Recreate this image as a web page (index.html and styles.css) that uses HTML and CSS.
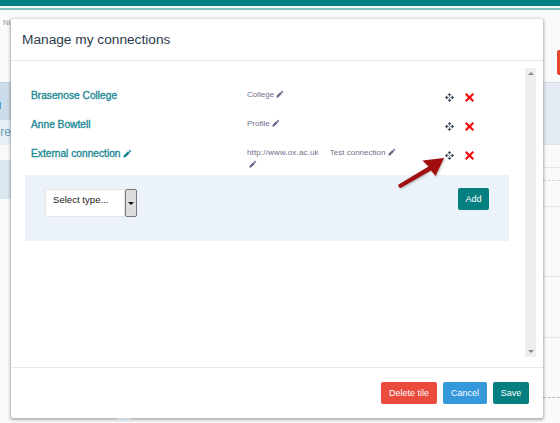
FILE: index.html
```html
<!DOCTYPE html>
<html lang="en">
<head>
<meta charset="utf-8">
<title>Manage my connections</title>
<link rel="stylesheet" href="styles.css">
</head>
<body>
<svg class="sprites" width="0" height="0" aria-hidden="true">
  <symbol id="pencil" viewBox="0 0 10 10"><path d="M7.300.7 9.300 2.700 8.200 3.800 6.200 1.800ZM5.600 2.400 7.600 4.400 3 9 .4 9.600 1 7Z"/></symbol>
  <symbol id="move" viewBox="0 0 11 11">
    <path d="M5.500 0 7.800 2.800H3.200ZM5.500 11 3.200 8.200H7.800ZM0 5.500 2.800 3.200V7.800ZM11 5.500 8.200 7.800V3.200Z"/>
    <path d="M4.900 2h1.200v2.600H4.900ZM4.900 6.400h1.200V9H4.900ZM2 4.900h2.600v1.200H2ZM6.400 4.900H9v1.200H6.400Z" opacity=".6"/>
  </symbol>
  <symbol id="cross" viewBox="0 0 10 10"><path d="M1.600 0 5 3.200 8.400 0 10 1.600 6.800 5 10 8.400 8.400 10 5 6.800 1.600 10 0 8.400 3.200 5 0 1.600Z"/></symbol>
</svg>

<div class="topbar"></div>
<div class="topline"></div>
<div class="backdrop">
  <div class="back-left">
    <span class="back-label">Ni</span>
    <div class="back-blue"><i class="back-mark"></i></div>
    <div class="back-light"><span class="back-re">re</span></div>
    <div class="back-blue2"></div>
  </div>
  <div class="back-right">
    <div class="back-red"></div>
    <div class="back-panel"></div>
    <div class="rule r1"></div>
    <div class="dash d1"></div>
    <div class="rule r2"></div>
    <div class="rule r3"></div>
    <div class="rule r4"></div>
    <div class="dash d2"></div>
  </div>
</div>

<main class="modal">
  <header class="modal-head"><h1>Manage my connections</h1></header>
  <section class="modal-body">
    <div class="list">
      <div class="row">
        <div class="name">Brasenose College</div>
        <div class="meta">College <svg class="pen"><use href="#pencil"/></svg></div>
        <div class="acts"><svg class="mv"><use href="#move"/></svg><svg class="del"><use href="#cross"/></svg></div>
      </div>
      <div class="row">
        <div class="name">Anne Bowtell</div>
        <div class="meta">Profile <svg class="pen"><use href="#pencil"/></svg></div>
        <div class="acts"><svg class="mv"><use href="#move"/></svg><svg class="del"><use href="#cross"/></svg></div>
      </div>
      <div class="row">
        <div class="name">External connection <svg class="pen pen-teal"><use href="#pencil"/></svg></div>
        <div class="meta meta-wide">
          <span class="url">http://www.ox.ac.uk<br><svg class="pen"><use href="#pencil"/></svg></span>
          <span>Test connection <svg class="pen"><use href="#pencil"/></svg></span>
        </div>
        <div class="acts"><svg class="mv"><use href="#move"/></svg><svg class="del"><use href="#cross"/></svg></div>
      </div>
      <div class="addbox">
        <div class="select">
          <span class="select-text">Select type...</span>
          <span class="select-btn"><i class="caret"></i></span>
        </div>
        <button class="btn btn-teal btn-add">Add</button>
      </div>
    </div>
    <div class="scrollbar">
      <i class="sb-up"></i>
      <i class="sb-down"></i>
    </div>
    <svg class="arrow" width="52" height="38" viewBox="0 0 52 38">
      <path d="M1.600 29.500 31.500 11.500 25.500 5.500 47 3 38.500 21 34 15.500 3.500 33Q.5 32 1.600 29.500Z" fill="#a00e0e"/>
    </svg>
  </section>
  <footer class="modal-foot">
    <button class="btn btn-red">Delete tile</button>
    <button class="btn btn-blue">Cancel</button>
    <button class="btn btn-teal">Save</button>
  </footer>
  <i class="under-tab"></i>
</main>
</body>
</html>
```
FILE: styles.css
```css
* { box-sizing: border-box; }
html, body { margin: 0; height: 100%; }
body {
  width: 560px;
  height: 423px;
  overflow: hidden;
  position: relative;
  background: #fafafa;
  font-family: "Liberation Sans", Arial, sans-serif;
  color: #333;
}
.sprites { position: absolute; }
.topbar { height: 6px; background: #047f81; }
.topline { height: 2px; margin-top: 2px; background: #7fc3c2; }

.backdrop { display: flex; justify-content: space-between; height: 413px; }
.back-left { width: 11px; position: relative; overflow: hidden; }
.back-label { position: absolute; left: 3px; top: 8px; font-size: 8px; color: #999; }
.back-blue { height: 38px; margin-top: 72px; background: #cbdcea; border-top: 1px solid #bfd2e0; position: relative; }
.back-mark { position: absolute; left: 0; top: 19px; width: 1px; height: 7px; background: #4b9fd0; }
.back-light { height: 25px; background: #e8eff6; font-size: 12px; line-height: 25px; color: #6b9cbc; text-align: right; }
.back-blue2 { height: 39px; margin-top: 15px; background: #dce8f0; }
.back-right { width: 17px; position: relative; }
.back-red { position: absolute; right: 0; top: 40px; width: 3px; height: 25px; background: #e8452f; border-radius: 2px 0 0 2px; }
.back-panel { height: 63px; margin-top: 72px; background: #e4ebf3; border-top: 1px solid #d5dfe9; border-bottom: 1px solid #dde5ec; }
.rule { height: 1px; background: #e6e6e6; }
.dash { height: 1px; border-top: 1px dashed #d2d2d2; }
.r1 { margin-top: 22px; }
.d1 { margin-top: 12px; }
.r2 { margin-top: 25px; }
.r3 { margin-top: 69px; }
.r4 { margin-top: 60px; }
.d2 { margin-top: 59px; border-top-color: #b8b8b8; }

.modal {
  position: absolute;
  left: 11px;
  top: 19px;
  width: 532px;
  height: 399px;
  display: flex;
  flex-direction: column;
  background: #fff;
  border-radius: 2px;
  box-shadow: 0 1px 3px 1px rgba(0,0,0,.3);
}
.under-tab { position: absolute; left: 106px; top: 399px; width: 14px; height: 2px; background: #c9d8e2; }
.modal-head { height: 42px; padding: 12px 11px 0; border-bottom: 1px solid #e8e8e8; flex: none; }
.modal-head h1 { margin: 0; font-size: 13.700px; line-height: 17px; font-weight: 400; color: #2c3a4a; }

.modal-body { flex: 1; position: relative; display: flex; padding: 7px 7px 10px 14px; }
.list { width: 484px; padding-top: 20px; }
.row { display: grid; grid-template-columns: 222px 198px 1fr; height: 29px; }
.name { padding: 1px 0 0 6px; font-size: 10.200px; line-height: 13px; color: #1e8a94; -webkit-text-stroke: .35px #1e8a94; }
.meta { padding-top: 1px; font-size: 8px; line-height: 12px; color: #70708e; }
.meta-wide { display: flex; gap: 11px; }
.url { letter-spacing: .15px; }
.url .pen { margin-left: 2px; }
.pen { width: 8px; height: 8px; fill: #66668a; vertical-align: -1px; }
.pen-teal { width: 9px; height: 9px; fill: #17808a; vertical-align: -1px; }
.acts { display: flex; align-items: flex-start; gap: 11px; padding: 4px 0 0 0; }
.mv { width: 9px; height: 9px; fill: #1e3348; margin-top: 1px; }
.del { width: 9px; height: 9px; fill: #f40b0b; margin-top: 1px; }

.addbox {
  height: 66px;
  padding: 13px 20px 0;
  background: #ebf2f9;
  display: flex;
  justify-content: space-between;
  align-items: flex-start;
}
.select { display: flex; height: 28px; width: 92px; margin-top: 1px; }
.select-text {
  width: 80px;
  padding: 3px 0 0 7px;
  background: #fff;
  border: 1px solid #e6e6e6;
  font-size: 9.600px;
  line-height: 13px;
  color: #222;
}
.select-btn {
  width: 12px;
  background: #ddd;
  border: 1px solid #777;
  border-radius: 2px;
  display: flex;
  align-items: center;
  justify-content: center;
}
.caret { width: 0; height: 0; border: 3px solid transparent; border-top-color: #111; border-bottom: 0; }

.scrollbar {
  width: 11px;
  margin-left: 16px;
  background: #eee;
  display: flex;
  flex-direction: column;
  justify-content: space-between;
  align-items: center;
  padding: 4px 0;
}
.sb-up, .sb-down { width: 0; height: 0; border: 3px solid transparent; }
.sb-up { border-bottom-color: #888; border-top: 0; }
.sb-down { border-top-color: #888; border-bottom: 0; }

.arrow { position: absolute; left: 386px; top: 94px; filter: drop-shadow(1px 1px 1px rgba(0,0,0,.25)); }

.modal-foot {
  height: 51px;
  flex: none;
  border-top: 1px solid #e8e8e8;
  padding: 14px 14px 0 0;
  display: flex;
  justify-content: flex-end;
  gap: 6px;
  align-items: flex-start;
}
.btn {
  height: 22px;
  padding: 0;
  border: 0;
  border-radius: 2px;
  color: #fff;
  font-family: inherit;
  font-size: 9px;
  line-height: 22px;
}
.btn-red { width: 56px; background: #ea4b3c; }
.btn-blue { width: 44px; background: #3498db; }
.btn-teal { width: 36px; background: #067f80; }
.btn-add { width: 31px; }
```
